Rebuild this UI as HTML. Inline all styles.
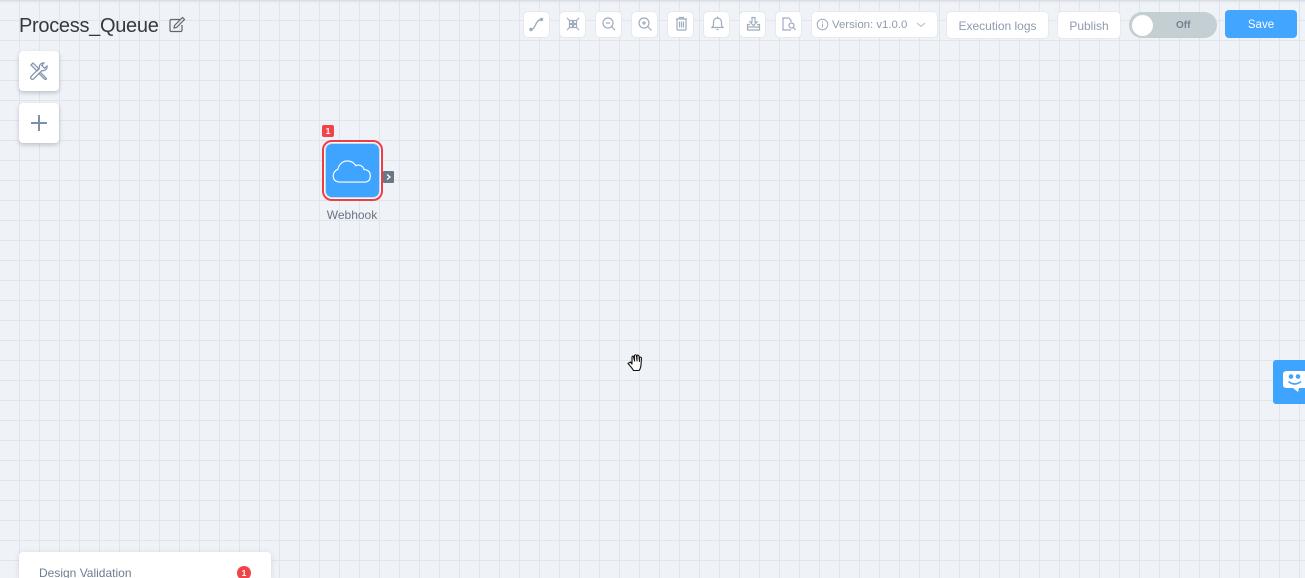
<!DOCTYPE html>
<html><head><meta charset="utf-8"><style>
*{box-sizing:border-box}
html,body{margin:0;padding:0;width:1305px;height:578px;overflow:hidden}
#r{position:absolute;left:0;top:0;width:1305px;height:578px;overflow:hidden;font-family:"Liberation Sans",sans-serif;background-color:#eff2f7;
background-image:linear-gradient(to right,#e0e4eb 1px,transparent 1px),linear-gradient(to bottom,#e0e4eb 1px,transparent 1px);background-size:20px 20px;background-position:19px 0}
.top{position:absolute;left:0;top:0;width:1305px;height:3px;background:linear-gradient(#d9dce2,rgba(239,242,247,0))}
.a{position:absolute}
.ib{position:absolute;top:11px;width:27px;height:27px;background:#fff;border:1px solid #e4e8ef;border-radius:5px}
.ib svg{position:absolute;left:4px;top:3px;width:17px;height:17px;fill:none;stroke:#a0abbd;stroke-width:1.2}
.btn{position:absolute;top:11px;height:28px;background:#fff;border:1px solid #e6e9f0;border-radius:5px;color:#8f9bad;font-size:12px;line-height:28px;text-align:center}
.side{position:absolute;left:19px;width:40px;height:40px;background:#fff;border-radius:4px;box-shadow:0 2px 4px rgba(60,70,90,.28)}
</style></head><body><div id="r">
<div class="top"></div>
<div class="a" style="left:19px;top:13px;font-size:20px;line-height:26px;color:#343a40;letter-spacing:-.3px;white-space:nowrap">Process_Queue</div>
<svg class="a" style="left:168px;top:16px" width="18" height="18" viewBox="0 0 18 18" fill="none" stroke="#5f666f" stroke-width="1.2"><path d="M12 3.500H3.500Q2 3.500 2 5V14Q2 15.500 3.500 15.500H12.500Q14 15.500 14 14V9"/><path d="M6.500 9.500L14.500 1.500L16.500 3.500L8.500 11.500L6 12Z"/></svg>

<div class="side" style="top:51px"><svg style="position:absolute;left:10px;top:10px" width="20" height="20" viewBox="0 0 20 20" fill="none" stroke="#8597b0" stroke-width="1.3"><path d="M2 4L4 2L10 8L8 10Z"/><path d="M11 11L17 17Q18 18.500 16.500 18.500Q16 18.500 15 17.500L9.500 12"/><path d="M18 5A4 4 0 0 1 13 9.500L4.500 18A1.800 1.800 0 0 1 2 15.500L10.500 7A4 4 0 0 1 15 2L12.800 4.500L15.500 7.200Z"/></svg></div>
<div class="side" style="top:103px"><svg style="position:absolute;left:10px;top:10px" width="20" height="20" viewBox="0 0 20 20" stroke="#7c90aa" stroke-width="2"><path d="M2 10H18M10 2V18"/></svg></div>

<div class="ib" style="left:523px"><svg viewBox="0 0 17 17"><path d="M3 14.500C8 14.500 7 4.500 13.500 4.500" stroke-width="1.400"/><circle cx="3" cy="14.500" r="1.100" fill="#a0abbd"/><circle cx="13.500" cy="4.500" r="1.100" fill="#a0abbd"/></svg></div>
<div class="ib" style="left:559px"><svg viewBox="0 0 17 17"><path d="M3 3L6 6M15 3L12 6M3 15L6 12M15 15L12 12"/><rect x="5.500" y="5.500" width="3" height="3"/><rect x="9.500" y="5.500" width="3" height="3"/><rect x="5.500" y="9.500" width="3" height="3"/><rect x="9.500" y="9.500" width="3" height="3"/></svg></div>
<div class="ib" style="left:595px"><svg viewBox="0 0 17 17"><circle cx="8" cy="8" r="5"/><path d="M11.500 11.500L15 15M6 8H10"/></svg></div>
<div class="ib" style="left:631px"><svg viewBox="0 0 17 17"><circle cx="8" cy="8" r="5"/><path d="M11.500 11.500L15.500 15.500M6 8H10M8 6V10"/></svg></div>
<div class="ib" style="left:667px"><svg viewBox="0 0 17 17"><path d="M4 4H15M7.500 4V2.500H11.500V4M5 4V14Q5 15 6 15H13Q14 15 14 14V4M7.500 6.500V12.500M9.500 6.500V12.500M11.500 6.500V12.500"/></svg></div>
<div class="ib" style="left:703px"><svg viewBox="0 0 17 17"><path d="M4 12.500H15L13.500 10.500V7A4 4 0 0 0 5.500 7V10.500ZM8.500 14.500H10.500M9.500 1.500V3"/></svg></div>
<div class="ib" style="left:739px"><svg viewBox="0 0 17 17"><path d="M8 2.500H11V7H13L9.500 10.500L6 7H8Z"/><path d="M6 9.500H3.500V15H15.500V9.500H13M3.500 12H15.500"/></svg></div>
<div class="ib" style="left:775px"><svg viewBox="0 0 17 17"><path d="M9 3H3V15H11M9 3L11 5.500V7"/><circle cx="11.500" cy="10.500" r="2.500"/><path d="M13.500 12.500L15.500 15"/></svg></div>

<div class="btn" style="left:811px;width:127px;height:27px;font-size:11.400px;line-height:26px;text-align:left;padding-left:20px;color:#8f9bad">Version: v1.0.0
<svg class="a" style="left:4px;top:6px" width="13" height="13" viewBox="0 0 13 13" fill="none" stroke="#a0abbd"><circle cx="6.500" cy="6.500" r="5.300"/><path d="M6.500 5.500V9.500M6.500 3.300V4.500"/></svg>
<svg class="a" style="left:104px;top:9px" width="10" height="8" viewBox="0 0 10 8" fill="none" stroke="#b4bcc9"><path d="M1 2L5 5.500L9 2"/></svg></div>
<div class="btn" style="left:946px;width:103px">Execution logs</div>
<div class="btn" style="left:1057px;width:64px">Publish</div>
<div class="a" style="left:1129px;top:12px;width:88px;height:26px;border-radius:13px;background:#c3cfd2"><div class="a" style="left:3px;top:3px;width:21px;height:21px;border-radius:50%;background:#fff"></div><div class="a" style="left:47px;top:0;font-size:10px;font-weight:bold;line-height:27px;color:#74808f">Off</div></div>
<div class="a" style="left:1225px;top:10px;width:72px;height:28px;border-radius:4px;background:#42a5ff;color:#fff;font-size:11.500px;line-height:30px;text-align:center">Save</div>

<div class="a" style="left:322px;top:125px;width:12px;height:12px;border-radius:2px;background:#f0434a;color:#fff;font-size:8.500px;font-weight:bold;line-height:12px;text-align:center">1</div>
<div class="a" style="left:322px;top:140px;width:61px;height:61px;border:2px solid #ee3d44;border-radius:10px;background:#fff"></div>
<div class="a" style="left:325px;top:143px;width:55px;height:55px;border:1px solid #c9d9e8;border-radius:7px;background:#3fa4ff"></div>
<svg class="a" style="left:332px;top:158px" width="40" height="26" viewBox="0 0 41 27" fill="none" stroke="#fff" stroke-width="1.200"><path d="M9 25H33Q39.500 25 39.500 18.500Q39.500 12.500 33 12A6 6 0 0 0 24.500 8A10 10 0 0 0 6 11.500Q1 14 1 18.500Q1 25 9 25Z"/></svg>
<div class="a" style="left:383px;top:171px;width:11px;height:12px;background:#6b7785;border-radius:1px"><svg class="a" style="left:3px;top:3px" width="6" height="6" viewBox="0 0 6 6" fill="none" stroke="#fff" stroke-width="1.300"><path d="M1 .5L4 3L1 5.500"/></svg></div>
<div class="a" style="left:312px;top:208px;width:80px;text-align:center;font-size:12px;line-height:15px;color:#6a7483">Webhook</div>

<svg class="a" style="left:626px;top:352px" width="20" height="21" viewBox="0 0 20 21"><path d="M2 11.500L4.500 10L6 12V5Q6.500 3.500 7.500 4.500L8.500 9V3.500Q9.500 2 10.500 3.500L11 9V3.500Q12 2.500 13 4L13.500 9.500V5.500Q14.500 4.500 15.500 6L15 13Q14.500 17 13 18.500H7.500Q6.500 16.500 2 11.500Z" fill="#fff" stroke="#111" stroke-width="1.100" stroke-linejoin="round"/></svg>

<div class="a" style="left:1273px;top:360px;width:32px;height:44px;background:#3fa4ff;border-radius:3px 0 0 3px"></div>
<svg class="a" style="left:1283px;top:370px" width="22" height="24" viewBox="0 0 22 24"><path d="M4 1H22V18H16L15 22L10 18H4Q0 18 0 15V4Q0 1 4 1Z" fill="#fff"/><circle cx="8" cy="6.500" r="2.300" fill="#3fa4ff"/><circle cx="15" cy="6.500" r="2.300" fill="#3fa4ff"/><path d="M5.500 11.500Q11.500 16.500 18 11.500" fill="none" stroke="#3fa4ff" stroke-width="1.600"/></svg>

<div class="a" style="left:19px;top:552px;width:252px;height:26px;background:#fff;border-radius:4px 4px 0 0;box-shadow:0 1px 6px rgba(60,70,90,.16)"></div>
<div class="a" style="left:39px;top:565px;font-size:12px;line-height:16px;color:#6f7d90">Design Validation</div>
<div class="a" style="left:237px;top:566px;width:14px;height:14px;border-radius:50%;background:#f0434a;color:#fff;font-size:8.500px;font-weight:bold;line-height:14px;text-align:center">1</div>
</div></body></html>
